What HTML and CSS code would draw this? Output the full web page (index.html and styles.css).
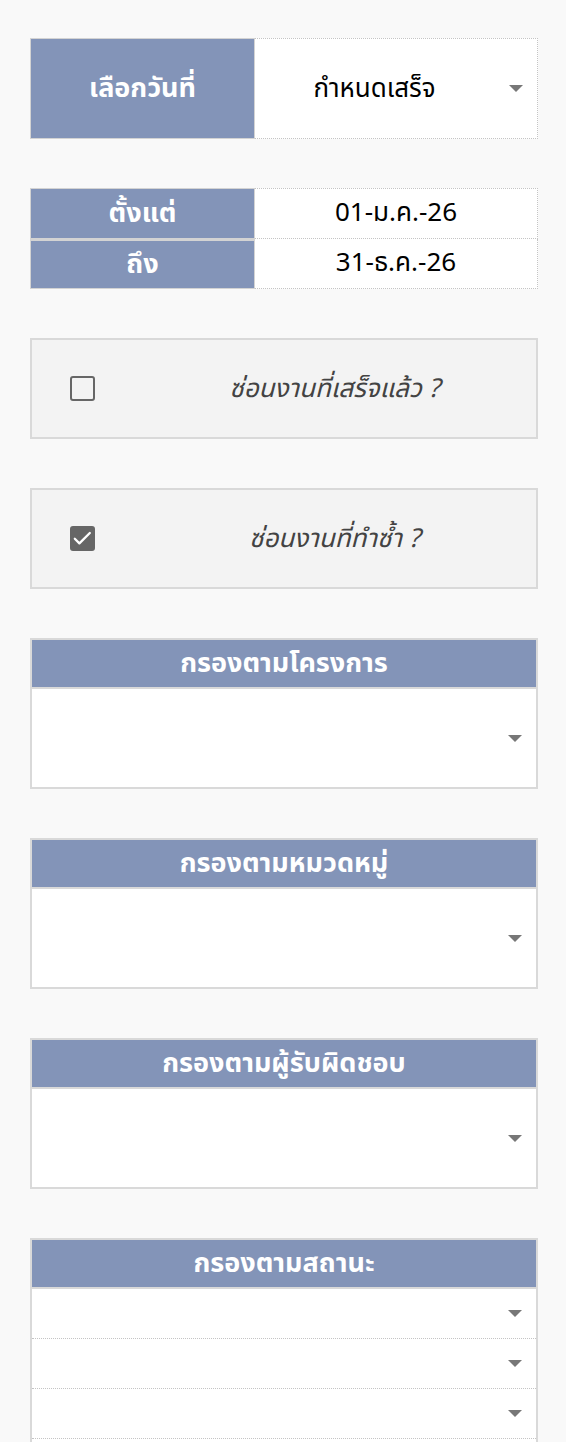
FILE: index.html
```html
<!DOCTYPE html>
<html>
    <head>
        <meta charset="utf-8" >
        <title>ตัวกรองงาน</title>
        <link rel="stylesheet" href="styles.css">
    </head>
    <body>
        <div class="panel">
            <div class="pair pair-big">
                <div class="label">เลือกวันที่</div>
                <div class="value select">
                    <span class="select-text">กำหนดเสร็จ</span>
                    <span class="caret-box"><span class="caret"></span></span>
                </div>
            </div>

            <div class="dates">
                <div class="pair pair-row">
                    <div class="label">ตั้งแต่</div>
                    <div class="value">01-ม.ค.-26</div>
                </div>
                <div class="pair pair-row">
                    <div class="label">ถึง</div>
                    <div class="value">31-ธ.ค.-26</div>
                </div>
            </div>

            <div class="check-row">
                <div class="check-cell"><span class="checkbox"></span></div>
                <div class="check-text">ซ่อนงานที่เสร็จแล้ว ?</div>
            </div>

            <div class="check-row">
                <div class="check-cell">
                    <span class="checkbox checked">
                        <svg viewBox="0 0 25 25" width="25" height="25"><path d="M4.8 12.8l4.6 4.6 10.4-10.4" fill="none" stroke="#fff" stroke-width="2.3" stroke-linecap="round" stroke-linejoin="round"/></svg>
                    </span>
                </div>
                <div class="check-text">ซ่อนงานที่ทำซ้ำ ?</div>
            </div>

            <div class="filter">
                <div class="filter-head">กรองตามโครงการ</div>
                <div class="filter-body select">
                    <span class="select-text"></span>
                    <span class="caret-box"><span class="caret"></span></span>
                </div>
            </div>

            <div class="filter">
                <div class="filter-head">กรองตามหมวดหมู่</div>
                <div class="filter-body select">
                    <span class="select-text"></span>
                    <span class="caret-box"><span class="caret"></span></span>
                </div>
            </div>

            <div class="filter">
                <div class="filter-head">กรองตามผู้รับผิดชอบ</div>
                <div class="filter-body select">
                    <span class="select-text"></span>
                    <span class="caret-box"><span class="caret"></span></span>
                </div>
            </div>

            <div class="filter">
                <div class="filter-head">กรองตามสถานะ</div>
                <div class="status-row select">
                    <span class="select-text"></span>
                    <span class="caret-box"><span class="caret"></span></span>
                </div>
                <div class="status-row select">
                    <span class="select-text"></span>
                    <span class="caret-box"><span class="caret"></span></span>
                </div>
                <div class="status-row select">
                    <span class="select-text"></span>
                    <span class="caret-box"><span class="caret"></span></span>
                </div>
                <div class="status-row select">
                    <span class="select-text"></span>
                    <span class="caret-box"><span class="caret"></span></span>
                </div>
            </div>
        </div>
    </body>
</html>
```

FILE: styles.css
```css
body {
    margin: 0;
    background-color: #f9f9f9;
    font-family: "Noto Sans Thai", "Noto Sans", "DejaVu Sans", sans-serif;
}
.panel {
    display: flex;
    flex-direction: column;
    gap: 49px;
    width: 508px;
    margin-left: 30px;
    padding-top: 38px;
}
.pair {
    display: flex;
}
.pair-big {
    height: 101px;
}
.dates {
    display: flex;
    flex-direction: column;
    height: 101px;
}
.pair-row {
    flex: 1;
}
.label {
    width: 225px;
    box-sizing: border-box;
    background-color: #8394b8;
    border: 1px solid #d3d3d3;
    color: #ffffff;
    font-weight: 700;
    font-size: 27px;
    display: flex;
    align-items: center;
    justify-content: center;
}
.pair-row + .pair-row .label {
    border-top: 2px solid #d3d3d3;
}
.value {
    flex: 1;
    box-sizing: border-box;
    background-color: #ffffff;
    border: 1px dotted #c4c4c4;
    border-left: none;
    font-size: 26px;
    color: #000;
    display: flex;
    align-items: center;
    justify-content: center;
}
.pair-row + .pair-row .value {
    border-top: none;
}
.select {
    justify-content: flex-start;
}
.select-text {
    flex: 1;
    text-align: center;
}
.caret-box {
    width: 43px;
    display: flex;
    justify-content: center;
}
.caret {
    width: 0;
    height: 0;
    border-left: 7px solid transparent;
    border-right: 7px solid transparent;
    border-top: 7px solid #777777;
}
.check-row {
    height: 101px;
    box-sizing: border-box;
    background-color: #f3f3f3;
    border: 2px solid #d9d9d9;
    display: flex;
    align-items: center;
}
.check-cell {
    width: 101px;
    display: flex;
    justify-content: center;
}
.checkbox {
    width: 25px;
    height: 25px;
    box-sizing: border-box;
    border: 2.5px solid #666666;
    border-radius: 3px;
    display: flex;
}
.checkbox.checked {
    background-color: #666666;
    border: none;
}
.check-text {
    flex: 1;
    text-align: center;
    font-size: 26px;
    font-style: italic;
    color: #434343;
}
.filter {
    display: flex;
    flex-direction: column;
    border: 2px solid #d9d9d9;
    border-bottom: none;
}
.filter-head {
    height: 49px;
    box-sizing: border-box;
    background-color: #8394b8;
    border-bottom: 2px solid #d9d9d9;
    color: #ffffff;
    font-weight: 700;
    font-size: 27px;
    display: flex;
    align-items: center;
    justify-content: center;
}
.filter-body {
    height: 100px;
    box-sizing: border-box;
    background-color: #ffffff;
    border-bottom: 2px solid #d9d9d9;
    display: flex;
    align-items: center;
}
.status-row {
    height: 50px;
    box-sizing: border-box;
    background-color: #ffffff;
    border-bottom: 1px dotted #c4c4c4;
    display: flex;
    align-items: center;
}
```
